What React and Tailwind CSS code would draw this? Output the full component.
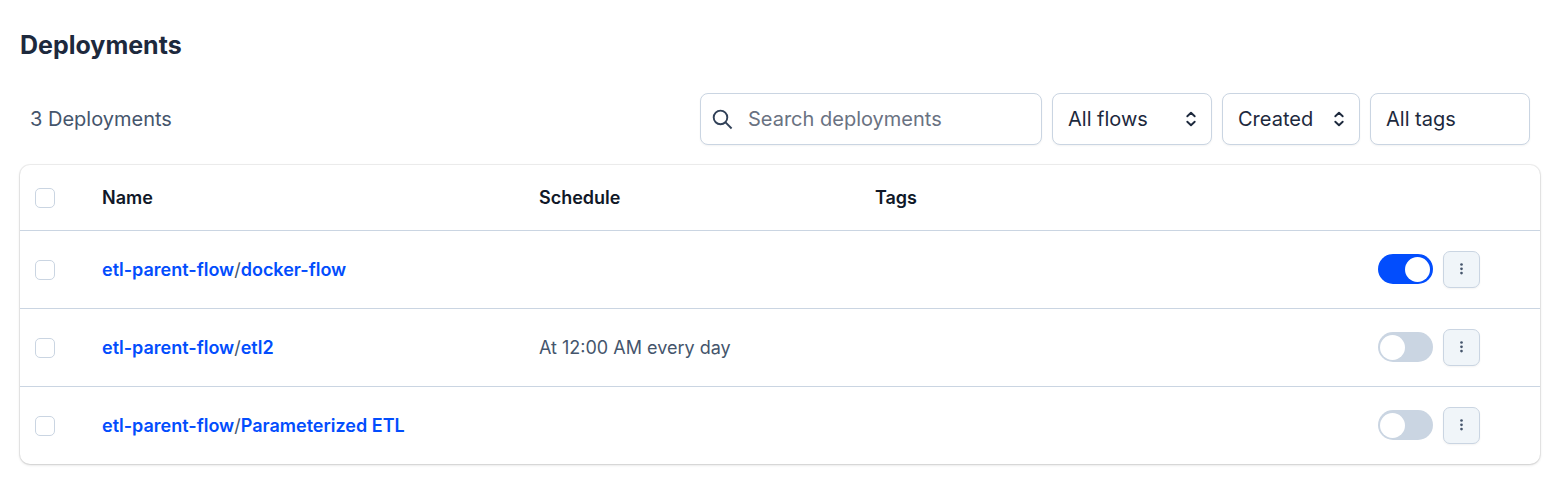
const deployments = [
  { flow: 'etl-parent-flow', name: 'docker-flow', schedule: '', active: true },
  { flow: 'etl-parent-flow', name: 'etl2', schedule: 'At 12:00 AM every day', active: false },
  { flow: 'etl-parent-flow', name: 'Parameterized ETL', schedule: '', active: false },
];

function SearchIcon() {
  return (
    <svg viewBox="0 0 25 25" fill="none" stroke="currentColor" strokeWidth="1.9" className="size-[25px] shrink-0 text-slate-700" aria-hidden="true">
      <circle cx="9.5" cy="10.4" r="6.8" />
      <path d="m14.3 15.2 6.3 6.3" />
    </svg>
  );
}

function SelectorIcon() {
  return (
    <svg viewBox="0 0 20 20" fill="none" stroke="currentColor" strokeWidth="1.9" strokeLinecap="round" strokeLinejoin="round" className="pointer-events-none absolute top-1/2 right-[11px] size-5 -translate-y-1/2 text-slate-800" aria-hidden="true">
      <path d="M6.3 7.3 10 3.8l3.7 3.5M6.3 12.7l3.7 3.5 3.7-3.5" />
    </svg>
  );
}

function Filter({ label, option, width, icon = true }) {
  return (
    <div className={`relative ${width}`}>
      <select aria-label={label} className="h-[52px] w-full appearance-none rounded-lg border border-slate-300 bg-white px-[15px] text-xl text-slate-800 shadow-xs">
        <option>{option}</option>
      </select>
      {icon && <SelectorIcon />}
    </div>
  );
}

function Checkbox({ label }) {
  return (
    <input type="checkbox" aria-label={label} className="block size-5 appearance-none rounded-[5px] border border-slate-300 bg-white checked:border-[#024dfd] checked:bg-[#024dfd]" />
  );
}

function Toggle({ label, active }) {
  return (
    <input
      type="checkbox"
      role="switch"
      aria-label={label}
      defaultChecked={active}
      className="flex h-[30px] w-[55px] shrink-0 appearance-none items-center rounded-full bg-slate-300 px-[2px] before:block before:size-[25px] before:rounded-full before:bg-white before:content-[''] checked:justify-end checked:bg-[#024dfd] checked:px-[3px]"
    />
  );
}

function MenuButton({ label }) {
  return (
    <button type="button" aria-label={label} className="flex size-[37px] items-center justify-center rounded-[7px] border border-slate-300 bg-[#f0f5f9] text-slate-600 shadow-xs">
      <svg viewBox="0 0 20 20" fill="currentColor" className="size-5" aria-hidden="true">
        <circle cx="9.5" cy="5.5" r="1.35" />
        <circle cx="9.5" cy="9.8" r="1.35" />
        <circle cx="9.5" cy="14.1" r="1.35" />
      </svg>
    </button>
  );
}

export default function App() {
  return (
    <main className="bg-white py-[30px] pr-7 pl-5 font-['Inter',sans-serif] text-slate-600">
      <h1 className="text-[25px] leading-[30px] font-bold text-slate-800">Deployments</h1>

      <div className="mt-[33px] flex items-center justify-between px-[10px]">
        <p className="text-xl">3 Deployments</p>
        <div className="flex gap-[10px]">
          <label className="flex h-[52px] w-[342px] items-center gap-3 rounded-lg border border-slate-300 bg-white px-[10px] shadow-xs">
            <SearchIcon />
            <input type="text" aria-label="Search deployments" placeholder="Search deployments" className="w-full min-w-0 bg-transparent text-xl text-slate-800 outline-none placeholder:text-gray-500" />
          </label>
          <Filter label="Flow" option="All flows" width="w-[160px]" />
          <Filter label="Sort by" option="Created" width="w-[138px]" />
          <Filter label="Tags" option="All tags" width="w-[160px]" icon={false} />
        </div>
      </div>

      <div className="mt-5 overflow-hidden rounded-[10px] shadow-[0_0_0_1px_rgba(0,0,0,0.06),0_1px_3px_rgba(0,0,0,0.16)]">
        <table className="w-full table-fixed border-collapse text-left text-lg">
          <colgroup>
            <col className="w-[67px]" />
            <col className="w-[28.75%]" />
            <col className="w-[22.1%]" />
            <col />
            <col className="w-[197px]" />
          </colgroup>
          <thead>
            <tr className="h-[65px] border-b border-slate-300 text-gray-900">
              <th className="px-[15px] pt-0.5"><Checkbox label="Select all deployments" /></th>
              <th className="px-[15px] pt-0.5 font-semibold">Name</th>
              <th className="px-[15px] pt-0.5 font-semibold">Schedule</th>
              <th className="px-[15px] pt-0.5 font-semibold">Tags</th>
              <th aria-label="Actions" />
            </tr>
          </thead>
          <tbody>
            {deployments.map((d) => (
              <tr key={d.name} className="h-[78px] border-b border-slate-300 last:border-b-0">
                <td className="px-[15px] pt-0.5"><Checkbox label={`Select ${d.name}`} /></td>
                <td className="px-[15px] pt-0.5">
                  <a href="#flow" className="font-semibold text-[#024dfd]">{d.flow}</a>
                  /
                  <a href="#deployment" className="font-semibold text-[#024dfd]">{d.name}</a>
                </td>
                <td className="px-[15px] pt-0.5">{d.schedule}</td>
                <td className="px-[15px]" />
                <td className="pr-[60px]">
                  <div className="flex items-center justify-end gap-[10px]">
                    <Toggle label={`Schedule for ${d.name}`} active={d.active} />
                    <MenuButton label={`Actions for ${d.name}`} />
                  </div>
                </td>
              </tr>
            ))}
          </tbody>
        </table>
      </div>
    </main>
  );
}
